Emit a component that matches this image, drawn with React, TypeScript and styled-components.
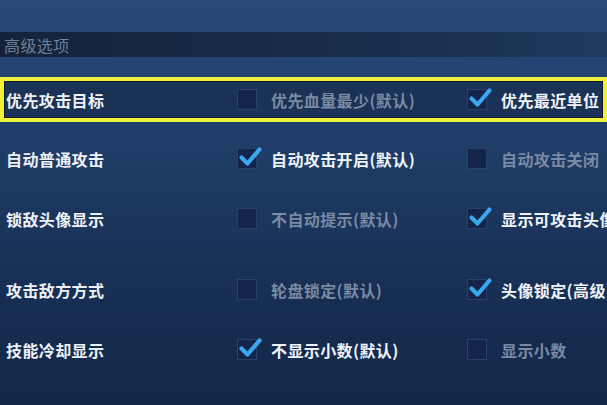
import React from "react";
import styled, { createGlobalStyle } from "styled-components";

const Global = createGlobalStyle`
  html, body { margin: 0; padding: 0; }
  body {
    background: #1a3256;
    font-family: "Noto Sans CJK SC", "Noto Sans", sans-serif;
  }
`;

const Page = styled.div`
  width: 607px;
  height: 405px;
  overflow: hidden;
  box-sizing: border-box;
  padding-top: 32px;
  background: linear-gradient(180deg, #26497a 0%, #22426e 25%, #1c375f 50%, #172e53 75%, #132848 100%);
  display: flex;
  flex-direction: column;
`;

const SectionHeader = styled.div`
  height: 25px;
  display: flex;
  align-items: center;
  padding-left: 4px;
  background: linear-gradient(90deg, #15223a 0%, #182a48 45%, #1c3456 85%, #1f3a60 100%);
  color: #6e7f98;
  font-size: 16px;
  letter-spacing: 0.4px;
`;

const Row = styled.div<{ $highlight?: boolean; $top: number }>`
  height: 45px;
  box-sizing: border-box;
  margin-top: ${(p) => p.$top}px;
  border: 4px solid ${(p) => (p.$highlight ? "#eef03a" : "transparent")};
  box-shadow: ${(p) => (p.$highlight ? "inset 0 0 0 1px #0d1a2a" : "none")};
  background: ${(p) => (p.$highlight ? "#1a3256" : "transparent")};
  padding-left: 2px;
  display: grid;
  grid-template-columns: 231px 230px 1fr;
  align-items: center;
  white-space: nowrap;
`;

const Label = styled.div`
  color: #eef2f7;
  font-size: 16px;
  font-weight: 700;
  letter-spacing: 0.4px;
`;

const Option = styled.div`
  display: flex;
  align-items: center;
  gap: 14px;
`;

const Box = styled.div`
  position: relative;
  width: 20px;
  height: 21px;
  box-sizing: border-box;
  background: #14244a;
  border: 1px solid #2b4068;
  flex: none;
`;

const Check = styled.svg`
  position: absolute;
  left: 1px;
  top: -3px;
  width: 22px;
  height: 22px;
  overflow: visible;
`;

const OptionText = styled.span<{ $on: boolean }>`
  color: ${(p) => (p.$on ? "#f0f4f8" : "#7a8aa2")};
  font-size: 16px;
  font-weight: 700;
  letter-spacing: 0.4px;
`;

type Opt = { text: string; on: boolean };

const rows: { label: string; a: Opt; b: Opt; top: number; hl?: boolean }[] = [
  { label: "优先攻击目标", a: { text: "优先血量最少(默认)", on: false }, b: { text: "优先最近单位", on: true }, top: 20, hl: true },
  { label: "自动普通攻击", a: { text: "自动攻击开启(默认)", on: true }, b: { text: "自动攻击关闭", on: false }, top: 14 },
  { label: "锁敌头像显示", a: { text: "不自动提示(默认)", on: false }, b: { text: "显示可攻击头像", on: true }, top: 15 },
  { label: "攻击敌方方式", a: { text: "轮盘锁定(默认)", on: false }, b: { text: "头像锁定(高级)", on: true }, top: 26 },
  { label: "技能冷却显示", a: { text: "不显示小数(默认)", on: true }, b: { text: "显示小数", on: false }, top: 15 },
];

function CheckOption({ opt }: { opt: Opt }) {
  return (
    <Option>
      <Box>
        {opt.on && (
          <Check viewBox="0 0 22 22">
            <path
              d="M2.5 11.5 L8.5 17.5 L20.5 3.5"
              fill="none"
              stroke="#3aa8ee"
              strokeWidth="4.2"
              strokeLinecap="round"
              strokeLinejoin="round"
            />
          </Check>
        )}
      </Box>
      <OptionText $on={opt.on}>{opt.text}</OptionText>
    </Option>
  );
}

export default function App() {
  return (
    <>
      <Global />
      <Page>
        <SectionHeader>高级选项</SectionHeader>
        {rows.map((r) => (
          <Row key={r.label} $highlight={r.hl} $top={r.top}>
            <Label>{r.label}</Label>
            <CheckOption opt={r.a} />
            <CheckOption opt={r.b} />
          </Row>
        ))}
      </Page>
    </>
  );
}
